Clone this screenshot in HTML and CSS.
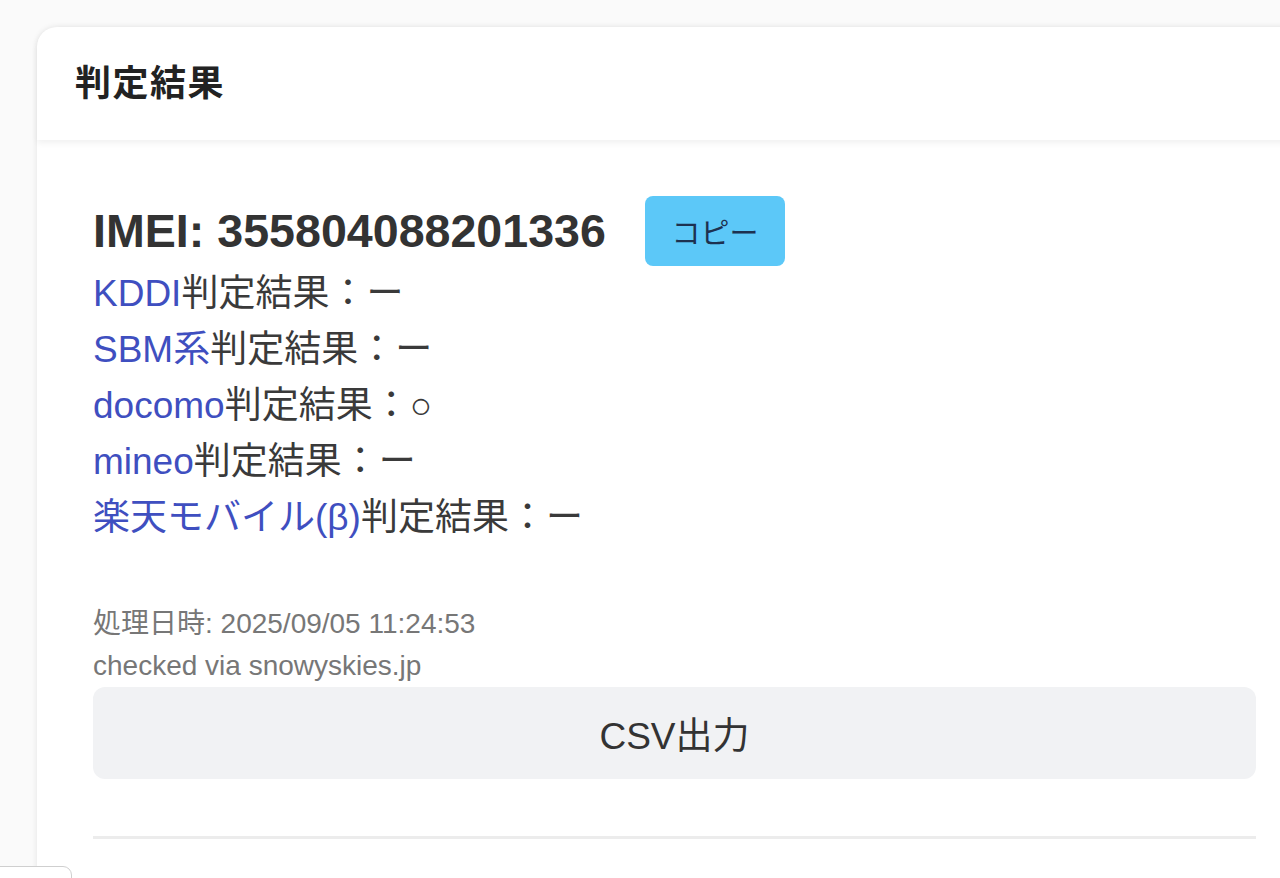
FILE: index.html
```html
<!DOCTYPE html>
<html lang="ja">
<head>
<meta charset="utf-8">
<title>判定結果</title>
<link rel="stylesheet" href="styles.css">
</head>
<body>
<div class="page">
  <section class="card">
    <header class="card-header">
      <h2 class="card-title">判定結果</h2>
    </header>
    <div class="card-body">
      <div class="imei-row">
        <h3 class="imei">IMEI: 355804088201336</h3>
        <button class="copy-btn" type="button">コピー</button>
      </div>
      <ul class="results">
        <li><span class="carrier">KDDI</span>判定結果：ー</li>
        <li><span class="carrier">SBM系</span>判定結果：ー</li>
        <li><span class="carrier">docomo</span>判定結果：○</li>
        <li><span class="carrier">mineo</span>判定結果：ー</li>
        <li><span class="carrier">楽天モバイル(β)</span>判定結果：ー</li>
      </ul>
      <div class="meta">
        <p>処理日時: 2025/09/05 11:24:53</p>
        <p>checked via snowyskies.jp</p>
      </div>
      <button class="csv-btn" type="button">CSV出力</button>
      <hr class="divider">
    </div>
  </section>
</div>
<div class="corner-tab"></div>
</body>
</html>
```
FILE: styles.css
```css
html, body {
  margin: 0;
  padding: 0;
  background: #fafafa;
  overflow: hidden;
  font-family: "Liberation Sans", Arial, "Noto Sans CJK JP", sans-serif;
  color: #333;
}

.page {
  padding: 27px 0 0 37px;
  width: 1400px;
}

.card {
  width: 1275px;
  background: #fff;
  border-radius: 20px 20px 0 0;
  box-shadow: 0 0 6px rgba(0, 0, 0, 0.09);
}

.card-header {
  height: 113px;
  display: flex;
  align-items: center;
  padding-left: 38px;
  border-radius: 20px 20px 0 0;
  box-shadow: 0 3px 6px rgba(0, 0, 0, 0.06);
  position: relative;
}

.card-title {
  margin: 0;
  font-size: 36px;
  font-weight: bold;
  color: #222;
  letter-spacing: 1.5px;
  padding-bottom: 8px;
}

.card-body {
  padding: 56px 56px 40px 56px;
}

.imei-row {
  display: flex;
  align-items: center;
  gap: 39px;
  height: 70px;
}

.imei {
  margin: 0;
  font-size: 46.6px;
  font-weight: bold;
  color: #333;
}

.copy-btn {
  width: 140px;
  height: 70px;
  border: none;
  border-radius: 8px;
  background: #5cc8f8;
  color: #1d3150;
  font-family: "Liberation Sans", "Noto Sans CJK JP", sans-serif;
  font-size: 29px;
  padding: 0;
}

.results {
  list-style: none;
  margin: 0;
  padding: 0;
}

.results li {
  font-size: 37px;
  line-height: 56px;
  color: #3a3a3a;
  white-space: nowrap;
}

.carrier {
  color: #3f4fc0;
}

.meta {
  margin-top: 57px;
}

.meta p {
  margin: 0;
  font-size: 28px;
  line-height: 42px;
  color: #777;
}

.csv-btn {
  display: block;
  width: 100%;
  height: 92px;
  border: none;
  border-radius: 12px;
  background: #f1f2f4;
  color: #333;
  font-family: "Liberation Sans", "Noto Sans CJK JP", sans-serif;
  font-size: 37px;
  padding: 0;
}

.divider {
  margin: 57px 0 0 0;
  border: none;
  border-top: 3px solid #ececec;
}

.corner-tab {
  position: fixed;
  left: -10px;
  top: 866px;
  width: 80px;
  height: 40px;
  background: #fff;
  border: 1px solid #cfcfcf;
  border-radius: 0 9px 0 0;
}
```
